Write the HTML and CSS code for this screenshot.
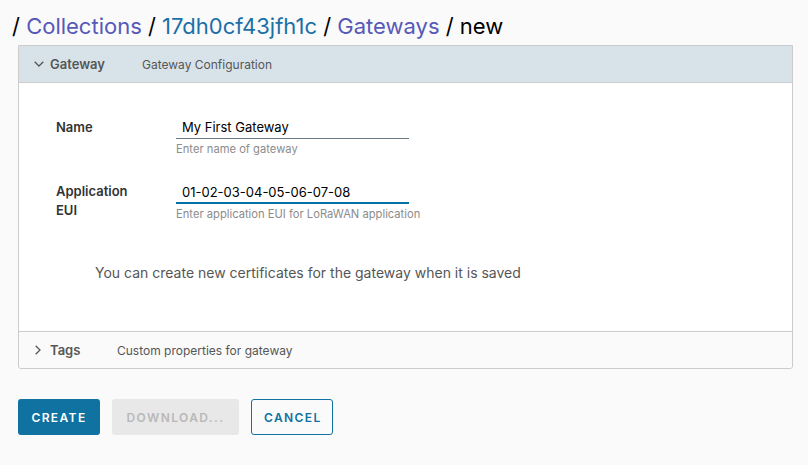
FILE: index.html
```html
<!DOCTYPE html>
<html>
<head>
<meta charset="utf-8">
<link rel="stylesheet" href="styles.css">
</head>
<body>
<div class="page">
  <h1 class="crumbs">/ <a class="visited" href="#">Collections</a> / <a class="link" href="#">17dh0cf43jfh1c</a> / <a class="visited" href="#">Gateways</a> / new</h1>

  <div class="stack">
    <div class="block open">
      <div class="block-head head-blue">
        <svg class="chev" width="10" height="6" viewBox="0 0 10 6"><path d="M0.7 0.7 L5 5 L9.3 0.7" fill="none" stroke="#565656" stroke-width="1.3"/></svg>
        <span class="title">Gateway</span>
        <span class="desc">Gateway Configuration</span>
      </div>
      <div class="block-body">
        <div class="form-row">
          <label class="lbl">Name</label>
          <div class="ctrl">
            <div class="input">My First Gateway</div>
            <div class="helper">Enter name of gateway</div>
          </div>
        </div>
        <div class="form-row">
          <label class="lbl">Application<br>EUI</label>
          <div class="ctrl">
            <div class="input focus">01-02-03-04-05-06-07-08</div>
            <div class="helper">Enter application EUI for LoRaWAN application</div>
          </div>
        </div>
        <p class="note">You can create new certificates for the gateway when it is saved</p>
      </div>
    </div>
    <div class="block">
      <div class="block-head head-gray">
        <svg class="chev right" width="6" height="10" viewBox="0 0 6 10"><path d="M0.7 0.7 L5 5 L0.7 9.3" fill="none" stroke="#565656" stroke-width="1.3"/></svg>
        <span class="title">Tags</span>
        <span class="desc tags-desc">Custom properties for gateway</span>
      </div>
    </div>
  </div>

  <div class="actions">
    <button class="btn primary">CREATE</button>
    <button class="btn disabled">DOWNLOAD...</button>
    <button class="btn outline">CANCEL</button>
  </div>
</div>
</body>
</html>
```
FILE: styles.css
```css
html, body {
  margin: 0;
  padding: 0;
  background: #fafafa;
}
body {
  font-family: Inter, "Noto Sans", sans-serif;
  color: #565656;
}
.page {
  padding: 0 15px 0 18px;
}
.crumbs {
  margin: 0 0 0 -6px;
  padding-top: 13px;
  height: 45px;
  box-sizing: border-box;
  font-size: 22px;
  font-weight: 400;
  line-height: 26px;
  color: #000;
  letter-spacing: 0;
}
.crumbs a { text-decoration: none; }
.crumbs .visited { color: #5659b8; }
.crumbs .link { color: #1b70a6; }

.stack {
  border: 1px solid #cccccc;
  border-radius: 0 0 3px 3px;
  background: #fff;
}
.block-head {
  display: flex;
  align-items: center;
  height: 36px;
  padding-left: 15px;
}
.head-blue {
  background: #d8e3e9;
  border-bottom: 1px solid #cccccc;
}
.head-gray {
  background: #fafafa;
  border-top: 1px solid #cccccc;
  border-radius: 0 0 3px 3px;
}
.chev { margin-right: 6px; }
.chev.right { margin-left: 1px; margin-right: 9px; }
.title {
  font-size: 13px;
  font-weight: 600;
  color: #565656;
  width: 92px;
}
.head-gray .title { width: 67px; }
.desc {
  font-size: 12px;
  color: #565656;
}

.block-body {
  padding: 36px 0 0 37px;
  height: 248px;
  box-sizing: border-box;
}
.form-row {
  display: flex;
  margin-bottom: 27px;
}
.lbl {
  width: 120px;
  font-size: 13px;
  font-weight: 600;
  line-height: 19px;
  color: #333;
  margin-top: -1px;
}
.ctrl { width: 233px; }
.input {
  font-size: 13px;
  color: #000;
  height: 20px;
  line-height: 17px;
  padding-left: 6px;
  border-bottom: 1px solid #6a7a85;
  box-sizing: border-box;
}
.input.focus {
  border-bottom: 2px solid #0072a3;
  height: 21px;
  line-height: 18px;
}
.helper {
  font-size: 11.2px;
  color: #8c8c8c;
  margin-top: 3px;
  white-space: nowrap;
}
.note {
  margin: 43px 0 0 39px;
  font-size: 14px;
  color: #565656;
}

.actions {
  display: flex;
  gap: 12px;
  margin-top: 30px;
}
.btn {
  height: 36px;
  border-radius: 3px;
  font-family: Inter, "Noto Sans", sans-serif;
  font-size: 12px;
  font-weight: 600;
  letter-spacing: 1.4px;
  padding: 0 12px;
  border: 1px solid transparent;
  box-sizing: border-box;
}
.primary { background: #0f72a1; color: #fff; width: 82px; }
.disabled { background: #e8e8e8; color: #b8b8b8; width: 127px; margin-left: 0; }
.outline { background: transparent; color: #0f72a1; border-color: #0f72a1; width: 82px; }
```
